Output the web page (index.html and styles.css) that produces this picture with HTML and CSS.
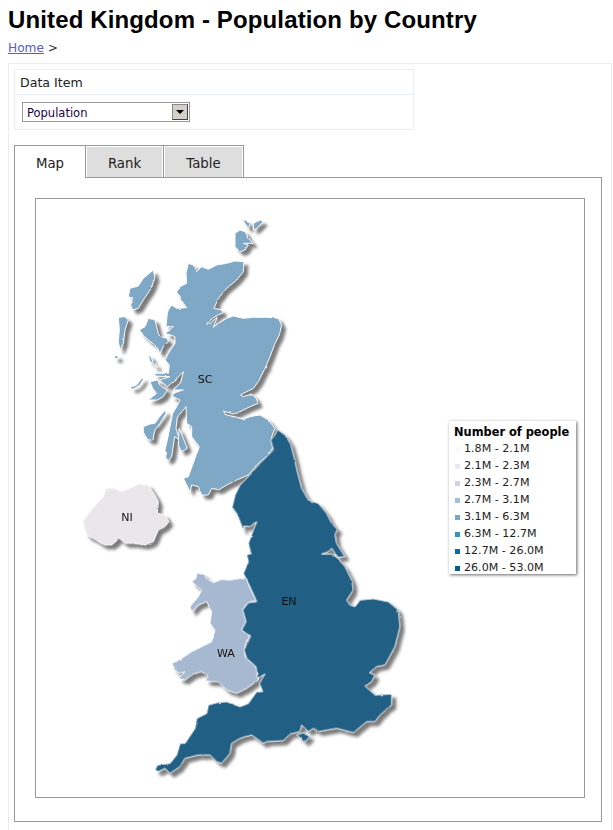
FILE: index.html
```html
<!DOCTYPE html>
<html lang="en">
<head>
<meta charset="utf-8">
<title>United Kingdom - Population by Country</title>
<link rel="stylesheet" href="styles.css">
</head>
<body>
<h1 class="title">United Kingdom - Population by Country</h1>
<p class="crumbs"><a href="#">Home</a> &gt;</p>
<main class="outer">
  <section class="filter">
    <div class="filter-head">Data Item</div>
    <div class="filter-body">
      <div class="select"><span class="select-text">Population</span><span class="select-btn"><span class="select-arrow"></span></span></div>
    </div>
  </section>
  <nav class="tabs">
    <span class="tab tab-on">Map</span>
    <span class="tab tab-rank">Rank</span>
    <span class="tab tab-table">Table</span>
  </nav>
  <section class="panel">
    <div class="frame">
      <svg class="map" viewBox="36 199 548 598" aria-label="Map of the United Kingdom">
        <defs>
          <filter id="relief" x="36" y="199" width="548" height="598" filterUnits="userSpaceOnUse" color-interpolation-filters="sRGB">
            <feTurbulence type="fractalNoise" baseFrequency=".14" numOctaves="2" seed="7" result="noise"/>
            <feDisplacementMap in="SourceGraphic" in2="noise" scale="2" xChannelSelector="R" yChannelSelector="G" result="land"/>
            <feGaussianBlur in="land" stdDeviation=".5" result="soft"/>
            <feDropShadow in="soft" dx="4" dy="4" stdDeviation="1.6" flood-color="#444" flood-opacity=".7"/>
          </filter>
        </defs>
        <g class="regions" filter="url(#relief)">
          <g class="scotland" transform="translate(80 210) scale(.33333)">
            <path d="M325 160L340 165 350 185 365 170 385 178 410 165 440 160 465 153 492 155 490 185 470 210 440 235 415 265 402 295 425 300 428 308 405 320 385 335 380 343 395 335 412 322 400 352 415 340 440 325 460 318 490 325 520 322 560 322 595 325 605 345 598 375 585 400 570 440 555 475 535 515 520 535 490 550 482 555 490 560 515 552 528 565 535 580 510 590 480 605 460 612 430 603 440 615 470 622 490 628 510 620 540 615 565 630 585 655 575 680 580 710 565 735 530 765 505 795 470 810 440 825 415 840 395 835 385 855 365 855 355 830 335 825 330 845 310 805 325 800 345 745 358 710 335 680 335 650 320 640 318 590 292 622 288 655 298 690 284 680 275 740 265 752 258 745 255 720 262 690 270 650 278 610 290 590 300 570 275 558 285 548 310 540 280 540 302 518 310 485 288 508 262 530 238 510 270 500 225 498 225 490 265 490 268 465 255 450 265 430 285 400 285 380 258 370 280 350 258 350 262 310 265 300 275 285 290 295 320 293 300 265 290 245 300 230 320 220 318 190Z"/>
            <path d="M220 180L225 205 210 240 190 270 175 295 158 300 152 285 158 265 145 260 150 235 175 228 190 205Z"/>
            <path d="M115 322L135 320 145 330 135 360 130 400 120 420 115 395 118 360Z"/>
            <path d="M102 440L112 435 115 445 108 447Z"/>
            <path d="M178 360L195 350 205 325 225 330 235 370 240 380 262 385 265 395 250 410 240 430 230 410 205 390 190 375Z"/>
            <path d="M205 435L213 440 220 460 210 455Z"/>
            <path d="M225 460L232 472 225 470Z"/>
            <path d="M152 532L170 525 185 505 192 505 180 525 160 538Z"/>
            <path d="M210 515L232 510 245 530 262 540 250 560 232 570 205 570 230 550 218 535Z"/>
            <path d="M235 625L255 600 258 610 240 640 225 660 218 690 205 690 190 670 190 650 210 642 225 640Z"/>
            <path d="M297 655L310 685 322 715 305 725 295 705Z"/>
            <path d="M465 70L480 60 495 65 510 90 520 100 490 100 505 105 495 120 480 125 465 110Z"/>
            <path d="M487 28L500 32 510 45 505 55 495 40Z"/>
            <path d="M520 40L540 30 550 35 530 55 520 60Z"/>
          </g>
          <g class="wales" transform="translate(70 480) scale(.33333)">
            <path d="M380 280L400 282 410 295 430 308 455 298 480 300 510 295 530 297 540 325 560 362 540 365 520 385 525 410 530 430 515 450 540 465 525 495 525 530 555 555 565 575 565 600 530 625 500 640 470 630 445 605 420 605 405 600 415 590 395 575 370 582 345 600 325 595 345 575 330 580 320 575 305 550 335 535 365 515 395 500 425 485 435 450 420 430 425 395 410 365 385 375 365 395 360 380 385 350 395 330 365 305 378 295Z"/>
          </g>
          <g class="ireland" transform="translate(70 480) scale(.33333)">
            <path d="M38 125L60 95 85 65 100 50 108 25 130 25 150 35 180 25 205 12 235 15 255 45 265 65 262 100 285 105 297 125 285 140 265 150 250 185 225 195 190 190 165 190 148 175 125 195 100 195 75 178 50 165Z"/>
          </g>
          <g class="england" transform="translate(220 420) scale(.33333)">
            <path d="M172 28L195 45 212 72 222 110 232 155 245 205 265 240 295 250 320 280 335 310 352 328 345 345 350 370 365 395 375 410 355 412 345 400 335 385 325 395 305 402 335 402 350 412 375 440 395 480 400 510 380 540 390 555 405 560 420 540 460 536 505 545 535 570 540 620 525 680 495 735 470 740 448 758 465 765 455 785 435 798 465 825 515 822 515 855 480 885 465 905 440 905 400 938 350 925 295 935 280 925 265 935 245 915 240 935 210 942 190 962 140 965 130 970 95 945 60 955 35 970 30 1000 5 1030 -10 1025 -30 1005 -65 1005 -105 1015 -120 1040 -150 1060 -165 1045 -185 1055 -195 1050 -188 1035 -150 1030 -130 1005 -120 970 -105 970 -75 925 -70 895 -40 880 -35 855 -10 848 20 845 60 860 85 850 110 815 128 815 118 790 135 762 112 775 108 740 80 715 72 690 92 648 78 640 65 630 78 605 68 570 85 548 110 545 90 500 70 460 85 425 80 405 92 400 85 370 100 330 110 305 90 320 72 318 70 332 62 310 50 280 36 262 45 225 60 195 85 170 120 130 160 90 152 60 165 45Z"/>
            <path d="M230 945L250 938 270 950 255 965Z"/>
          </g>
        </g>
        <text class="code" x="205" y="383" text-anchor="middle">SC</text>
        <text class="code" x="127" y="521" text-anchor="middle">NI</text>
        <text class="code" x="226" y="657" text-anchor="middle">WA</text>
        <text class="code" x="289" y="605" text-anchor="middle">EN</text>
      </svg>
      <aside class="legend">
        <h2 class="legend-title">Number of people</h2>
        <ul class="legend-list">
          <li class="legend-row"><span class="sw sw1"></span>1.8M - 2.1M</li>
          <li class="legend-row"><span class="sw sw2"></span>2.1M - 2.3M</li>
          <li class="legend-row"><span class="sw sw3"></span>2.3M - 2.7M</li>
          <li class="legend-row"><span class="sw sw4"></span>2.7M - 3.1M</li>
          <li class="legend-row"><span class="sw sw5"></span>3.1M - 6.3M</li>
          <li class="legend-row"><span class="sw sw6"></span>6.3M - 12.7M</li>
          <li class="legend-row"><span class="sw sw7"></span>12.7M - 26.0M</li>
          <li class="legend-row"><span class="sw sw8"></span>26.0M - 53.0M</li>
        </ul>
      </aside>
    </div>
  </section>
</main>
</body>
</html>
```
FILE: styles.css
```css
html, body { margin: 0; padding: 0; background: #fff; }
body { width: 613px; height: 830px; overflow: hidden; font-family: "DejaVu Sans", sans-serif; color: #222; }
.title { margin: 0; padding: 6px 0 0 8px; font: bold 24px/28px "Liberation Sans", sans-serif; letter-spacing: .13px; color: #000; }
.crumbs { margin: 0; padding: 6px 0 0 8px; font-size: 12.2px; line-height: 17px; height: 23px; box-sizing: content-box; color: #333; }
.crumbs a { color: #5a5ac8; }
.outer { margin-left: 8px; width: 604px; height: 800px; box-sizing: border-box; border: 1px solid #e8ecf4; padding: 5px 0 0 5px; }
.filter { width: 400px; box-sizing: border-box; border: 1px solid #e8ecf4; font-size: 12.6px; }
.filter-head { height: 25px; line-height: 25px; padding-left: 5px; box-sizing: border-box; border-bottom: 1px solid #e8ecf4; }
.filter-body { height: 34px; padding: 7px 0 0 7px; box-sizing: border-box; }
.select { width: 168px; height: 20px; box-sizing: border-box; border: 1px solid #999; display: flex; justify-content: space-between; color: #220044; font-size: 11.5px; line-height: 20px; padding-left: 4px; }
.select-btn { width: 16px; height: 16px; margin: 1px; box-sizing: border-box; background: #d4d0c8; border: 1px solid #444; border-left-color: #888; border-top-color: #888; display: flex; align-items: center; justify-content: center; }
.select-arrow { width: 0; height: 0; border: 4px solid transparent; border-top-color: #000; border-bottom: 0; }
.tabs { display: flex; margin: 15px 0 0; height: 32px; font-size: 13.3px; color: #222; }
.tab { box-sizing: border-box; height: 32px; line-height: 35px; text-align: center; border: 1px solid #999; border-bottom: 0; background: #dedede; box-shadow: inset 1px 1px #fff, inset -1px 0 #fff; }
.tab-on { width: 72px; background: #fff; height: 33px; position: relative; z-index: 1; box-shadow: none; }
.tab-rank { width: 78px; border-left: 0; }
.tab-table { width: 80px; border-left: 0; }
.panel { width: 588px; height: 645px; box-sizing: border-box; border: 1px solid #999; padding: 20px 0 0 20px; }
.frame { position: relative; width: 550px; height: 600px; box-sizing: border-box; border: 1px solid #999; }
.map { display: block; width: 548px; height: 598px; }
.regions path { stroke: #fbfcfd; stroke-width: 3; stroke-linejoin: round; }
.scotland { fill: #7fa7c6; }
.wales { fill: #a7b8d1; }
.ireland { fill: #ebe6ea; }
.england { fill: #225f84; }
.code { font: 11px "DejaVu Sans", sans-serif; fill: #111; }
.legend { position: absolute; left: 413px; top: 222px; width: 127px; height: 153px; box-sizing: border-box; background: #fff; box-shadow: 1px 1px 3px rgba(0, 0, 0, .6); padding: 3px 0 0 6px; font: 11.1px/17px "DejaVu Sans", sans-serif; color: #222; }
.legend-title { margin: 0 0 0 -1px; font-size: 11.4px; line-height: 16px; font-weight: bold; color: #000; white-space: nowrap; }
.legend-list { list-style: none; margin: 0; padding: 0; }
.legend-row { display: flex; align-items: center; height: 17px; white-space: nowrap; }
.sw { width: 5px; height: 5px; margin: 2px 4px 0 0; }
.sw1 { background: #fff7fb; }
.sw2 { background: #ece7f2; }
.sw3 { background: #d0d1e6; }
.sw4 { background: #a6bddb; }
.sw5 { background: #74a9cf; }
.sw6 { background: #3690c0; }
.sw7 { background: #0570b0; }
.sw8 { background: #045a8d; }
```
